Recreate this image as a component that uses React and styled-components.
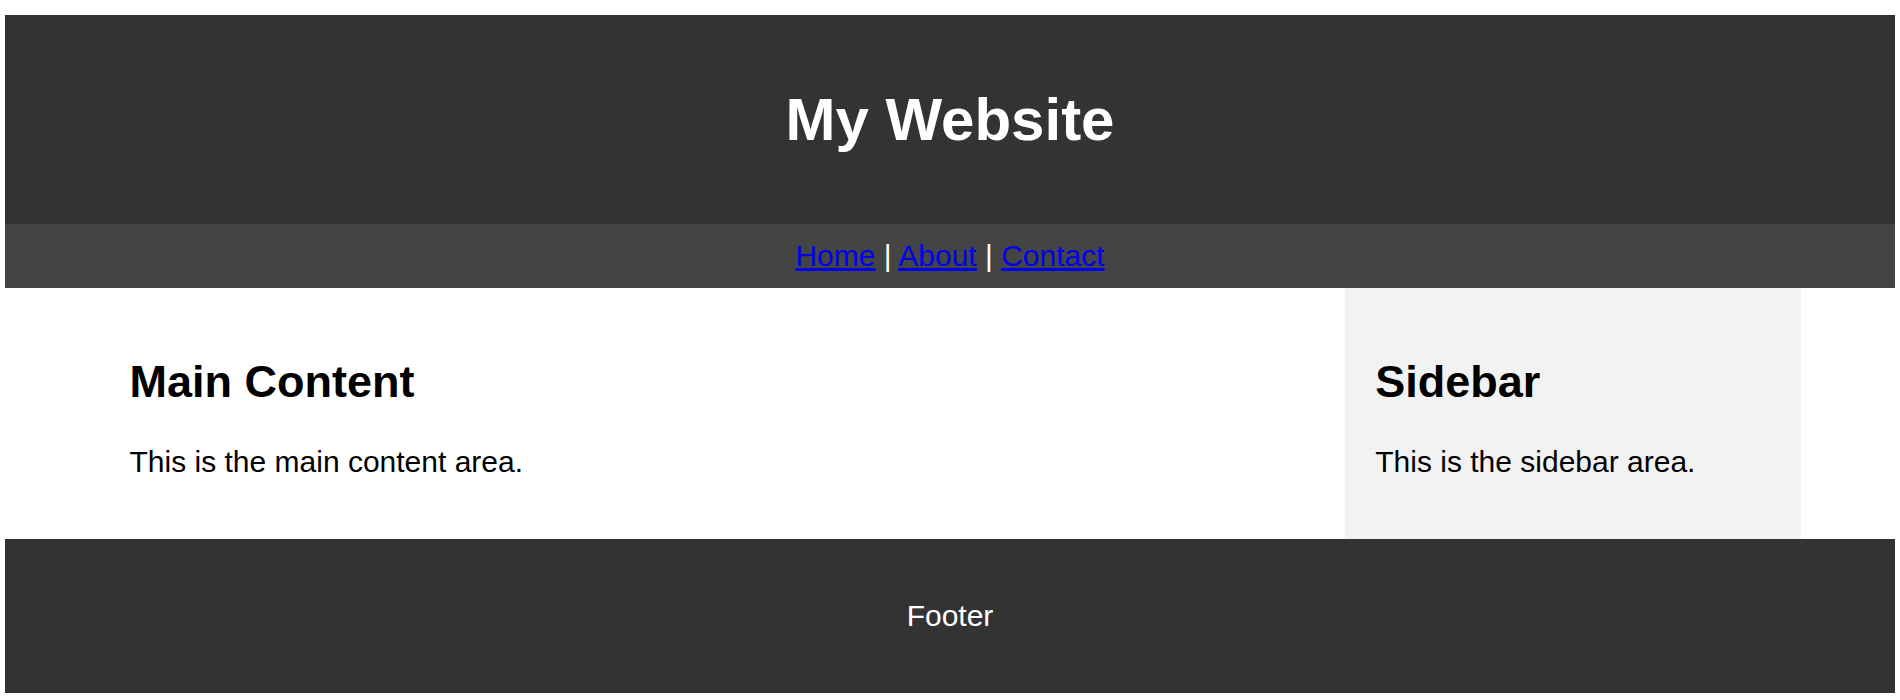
import React from "react";
import styled, { createGlobalStyle } from "styled-components";

const GlobalStyle = createGlobalStyle`
  body {
    margin: 15px 5px 0;
    font-family: "Liberation Sans", Arial, sans-serif;
    font-size: 30px;
    background: #fff;
  }
`;

const Header = styled.header`
  background: #333;
  color: #fff;
  text-align: center;
  padding: 30px;

  h1 {
    font-size: 60px;
    margin: 0.67em 0;
  }
`;

const Nav = styled.nav`
  background: #444;
  color: #fff;
  text-align: center;
  padding: 15px;

  a {
    color: #0000ee;
  }
`;

const Layout = styled.div`
  display: flex;
  margin: 0 5%;
`;

const Main = styled.main`
  flex: 3;
  padding: 30px;
`;

const Sidebar = styled.aside`
  flex: 1;
  padding: 30px;
  background: #f2f2f2;
`;

const Heading = styled.h2`
  font-size: 45px;
  margin: 0.83em 0;
`;

const Text = styled.p`
  margin: 1em 0;
`;

const Footer = styled.footer`
  background: #333;
  color: #fff;
  text-align: center;
  padding: 30px;

  p {
    margin: 1em 0;
  }
`;

const links = ["Home", "About", "Contact"];

const App = () => {
  return (
    <>
      <GlobalStyle />
      <Header>
        <h1>My Website</h1>
      </Header>
      <Nav>
        {links.map((link, i) => (
          <React.Fragment key={link}>
            {i > 0 && " | "}
            <a href="#">{link}</a>
          </React.Fragment>
        ))}
      </Nav>
      <Layout>
        <Main>
          <Heading>Main Content</Heading>
          <Text>This is the main content area.</Text>
        </Main>
        <Sidebar>
          <Heading>Sidebar</Heading>
          <Text>This is the sidebar area.</Text>
        </Sidebar>
      </Layout>
      <Footer>
        <p>Footer</p>
      </Footer>
    </>
  );
};

export default App;
